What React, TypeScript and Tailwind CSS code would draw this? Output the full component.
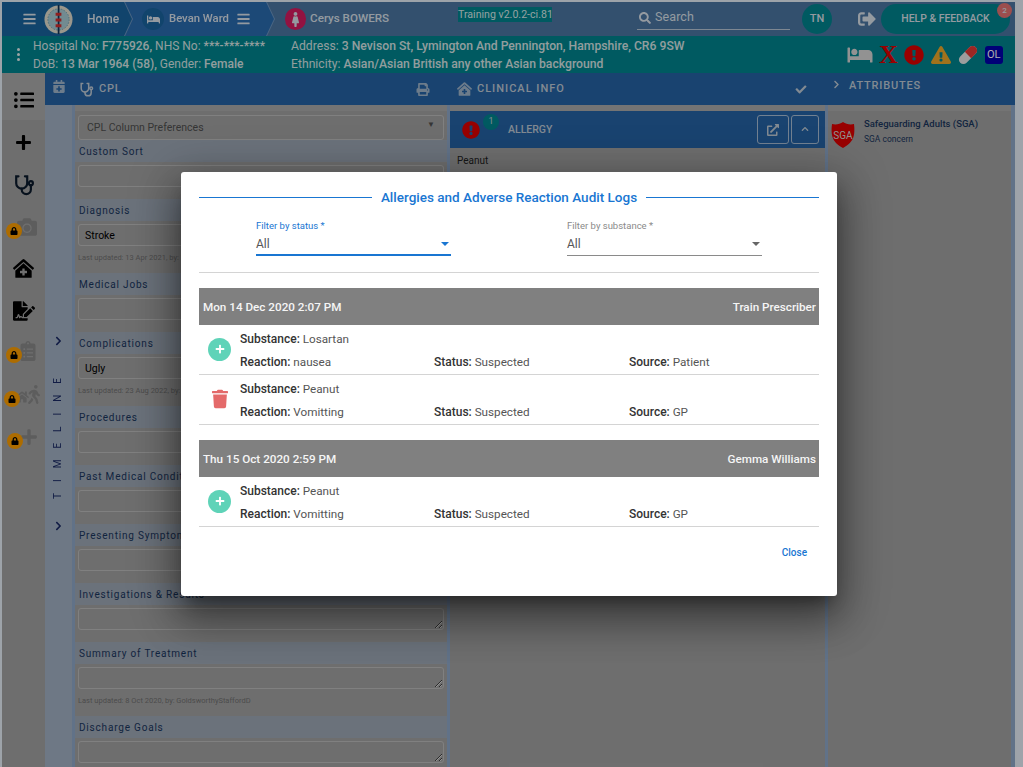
import {
  FaBars,
  FaBed,
  FaCamera,
  FaCalendarPlus,
  FaCheck,
  FaChevronRight,
  FaChevronUp,
  FaClinicMedical,
  FaClipboardList,
  FaExclamationCircle,
  FaExclamationTriangle,
  FaExternalLinkAlt,
  FaFemale,
  FaFileSignature,
  FaHome,
  FaListUl,
  FaLock,
  FaPlus,
  FaPrint,
  FaSearch,
  FaSignOutAlt,
  FaTrash,
  FaWalking,
} from "react-icons/fa";
import type { ReactNode } from "react";

const cplFields = [
  { label: "Custom Sort" },
  { label: "Diagnosis", value: "Stroke", note: "Last updated: 13 Apr 2021, by: WilliamsG" },
  { label: "Medical Jobs" },
  { label: "Complications", value: "Ugly", note: "Last updated: 23 Aug 2022, by: WilliamsG" },
  { label: "Procedures" },
  { label: "Past Medical Conditions" },
  { label: "Presenting Symptoms" },
  { label: "Investigations & Results" },
  { label: "Summary of Treatment", note: "Last updated: 8 Oct 2020, by: GoldsworthyStaffordD" },
  { label: "Discharge Goals" },
];

function Scope({ className }: { className: string }) {
  return (
    <svg viewBox="0 0 24 24" fill="none" stroke="currentColor" strokeWidth="2.4" strokeLinecap="round" className={className}>
      <path d="M6 2.5H3.5V10a6 6 0 0 0 12 0V2.5H13" />
      <path d="M9.5 16v1a5 5 0 0 0 10 0v-4" />
      <circle cx="19.5" cy="10" r="2.2" />
    </svg>
  );
}

function Logo() {
  return (
    <svg viewBox="0 0 30 30" className="h-[29px] w-[29px] shrink-0">
      <circle cx="15" cy="15" r="14.5" fill="#e4dfcf" />
      <circle cx="15" cy="15" r="11" fill="#a9cdd6" />
      <circle cx="15" cy="15" r="11" fill="none" stroke="#6f9fb0" strokeWidth="1" strokeDasharray="1.5 1.5" />
      <rect x="14.2" y="0" width="1.8" height="30" fill="#12345a" />
      <path d="M12 8h6v3h-6zM12 14h6v3h-6zM12 20h6v3h-6z" fill="#d32f2f" />
    </svg>
  );
}

function Shield() {
  return (
    <svg viewBox="0 0 24 26" className="h-[26px] w-[24px] shrink-0">
      <path d="M12 0c3 2 7 3 11 2 1 9 1 18-11 24C0 20 0 11 1 2c4 1 8 0 11-2z" fill="#e00000" />
      <text x="12" y="16.5" textAnchor="middle" fontSize="10" fill="#d8d8d8" fontFamily="Roboto, sans-serif">
        SGA
      </text>
    </svg>
  );
}

function Locked({ icon, left }: { icon: ReactNode; left: string }) {
  return (
    <div className="relative flex h-6 items-center justify-center text-[#8a8a8a]">
      {icon}
      <span className={`absolute top-[6px] flex h-[16px] w-[16px] items-center justify-center rounded-full bg-[#ffa000] text-black ${left}`}>
        <FaLock className="h-[8px] w-[8px]" />
      </span>
    </div>
  );
}

function Sidebar() {
  return (
    <aside className="flex w-[43px] shrink-0 flex-col items-center bg-[#a3a3a3] text-black">
      <div className="flex h-[47px] w-full items-end justify-center bg-[#acacac] pb-[10px]">
        <FaListUl className="h-[20px] w-[20px]" />
      </div>
      <FaPlus className="mt-[14px] h-[17px] w-[17px]" />
      <Scope className="mt-[23px] h-[22px] w-[22px] text-[#0b1a2c]" />
      <div className="mt-[21px] w-full">
        <Locked left="left-[4px]" icon={<FaCamera className="ml-[6px] h-[20px] w-[20px] -translate-y-[2px]" />} />
      </div>
      <FaClinicMedical className="mt-[17px] h-[21px] w-[21px]" />
      <FaFileSignature className="mt-[22px] h-[20px] w-[22px]" />
      <div className="mt-[20px] w-full">
        <Locked left="left-[4px]" icon={<FaClipboardList className="ml-[8px] h-[20px] w-[20px] -translate-y-[2px]" />} />
      </div>
      <div className="mt-[20px] w-full">
        <Locked
          left="left-[2px]"
          icon={
            <span className="ml-[8px] flex -translate-y-[3px] items-end">
              <FaHome className="h-[14px] w-[14px]" />
              <FaWalking className="-ml-[2px] h-[19px] w-[14px]" />
            </span>
          }
        />
      </div>
      <div className="mt-[18px] w-full">
        <Locked left="left-[5px]" icon={<FaPlus className="ml-[10px] h-[18px] w-[18px] -translate-y-[2px]" />} />
      </div>
    </aside>
  );
}

function TopBar() {
  return (
    <header className="flex h-[34px] items-stretch bg-[#4c76a3] font-['Roboto',sans-serif] text-[#dbe3ec]">
      <div className="relative z-20 [filter:drop-shadow(1px_0_0_#6f97c2)]">
        <div className="flex h-full w-[130px] items-center bg-[#1a659f] pl-[20px] [clip-path:polygon(0_0,122px_0,130px_50%,122px_100%,0_100%)]">
          <FaBars className="h-[14px] w-[15px]" />
          <span className="ml-[7px]">
            <Logo />
          </span>
          <span className="ml-[14px] text-[12px] font-medium">Home</span>
        </div>
      </div>
      <div className="relative z-10 -ml-[8px] [filter:drop-shadow(1px_0_0_#6f97c2)]">
        <div className="flex h-full w-[150px] items-center bg-[#2a6cb0] pl-[18px] [clip-path:polygon(0_0,142px_0,150px_50%,142px_100%,0_100%)]">
          <span className="flex h-[22px] w-[22px] items-center justify-center rounded-full bg-[#1a659f]">
            <FaBed className="h-[13px] w-[13px]" />
          </span>
          <span className="ml-[5px] w-[67px] whitespace-nowrap text-[11.3px] font-medium">Bevan Ward</span>
          <FaBars className="h-[14px] w-[15px]" />
        </div>
      </div>
      <div className="ml-[11px] flex w-[104px] items-center">
        <span className="flex h-[22px] w-[22px] items-center justify-center rounded-full bg-[#d81b60]">
          <FaFemale className="h-[15px] w-[15px]" />
        </span>
        <span className="ml-[4px] whitespace-nowrap text-[11.6px] font-medium">Cerys BOWERS</span>
      </div>
      <div className="ml-[69px] pt-[5px]">
        <span className="block h-[15px] w-[94px] bg-[#008590] text-[10.6px] leading-[15px] whitespace-nowrap text-[#dcecec]">
          Training v2.0.2-ci.81
        </span>
      </div>
      <div className="ml-[85px] mt-[4px] flex h-[24px] w-[153px] items-center border-b border-[#b8c8d8] pl-[2px]">
        <FaSearch className="h-[12px] w-[12px]" />
        <span className="ml-[4px] text-[12.5px] tracking-[0.1px]">Search</span>
      </div>
      <div className="ml-[12px] flex items-center">
        <span className="flex h-[30px] w-[30px] items-center justify-center rounded-full bg-[#008590] text-[11px] font-medium">TN</span>
        <FaSignOutAlt className="ml-[26px] h-[18px] w-[18px]" />
      </div>
      <div className="relative ml-[5px] mt-[2px] flex h-[30px] w-[129px] items-center justify-center rounded-full bg-[#008590] text-[10.4px] font-medium">
        HELP &amp; FEEDBACK
        <span className="absolute -top-[1px] -right-[2px] flex h-[15px] w-[15px] items-center justify-center rounded-full bg-[#e57373] text-[8px]">
          2
        </span>
      </div>
    </header>
  );
}

function PatientBar() {
  return (
    <section className="flex h-[37px] items-center bg-[#008590] font-['Roboto',sans-serif] text-[12.1px] leading-[18px] whitespace-nowrap text-[#d9e8e8]">
      <div className="flex w-[31px] flex-col items-center gap-[2px] pl-[1px]">
        <span className="h-[3px] w-[3px] rounded-full bg-[#e6f2f2]" />
        <span className="h-[3px] w-[3px] rounded-full bg-[#e6f2f2]" />
        <span className="h-[3px] w-[3px] rounded-full bg-[#e6f2f2]" />
      </div>
      <div className="w-[258px] pt-[1px] text-[12px]">
        <p>
          Hospital No: <b className="font-medium">F775926,</b> NHS No: <b className="font-medium">***-***-****</b>
        </p>
        <p>
          DoB: <b className="font-medium">13 Mar 1964 (58),</b> Gender: <b className="font-medium">Female</b>
        </p>
      </div>
      <div className="w-[556px] pt-[1px] text-[12.2px]">
        <p>
          Address: <b className="font-medium">3 Nevison St, Lymington And Pennington, Hampshire, CR6 9SW</b>
        </p>
        <p>
          Ethnicity: <b className="font-medium">Asian/Asian British any other Asian background</b>
        </p>
      </div>
      <div className="flex items-center gap-[7px]">
        <FaBed className="h-[20px] w-[26px] text-[#d8d8d8]" />
        <span className="-mx-[1px] font-['Liberation_Serif',serif] text-[26px] leading-[26px] font-bold text-[#e00000]">X</span>
        <FaExclamationCircle className="h-[20px] w-[20px] text-[#e00000]" />
        <FaExclamationTriangle className="h-[18px] w-[20px] text-[#eea82a]" />
        <svg viewBox="0 0 20 20" className="h-[20px] w-[20px]">
          <g transform="rotate(45 10 10)">
            <rect x="5.5" y="-1" width="9" height="22" rx="4.5" fill="#e8e8e8" />
            <path d="M5.5 10V3.5a4.5 4.5 0 0 1 9 0V10z" fill="#e53935" />
          </g>
        </svg>
        <span className="flex h-[18px] w-[18px] items-center justify-center rounded-[3px] bg-[#0000b0] text-[11px] text-white">OL</span>
      </div>
    </section>
  );
}

function SectionBar() {
  return (
    <div className="flex h-[32px] bg-[#2664a5] font-['Roboto',sans-serif] text-[11px] font-medium tracking-[0.8px] text-[#c0ccd8]">
      <div className="flex w-[402px] items-center">
        <FaCalendarPlus className="ml-[8px] h-[13px] w-[12px] -translate-y-[3px] opacity-80" />
        <Scope className="ml-[14px] h-[15px] w-[15px]" />
        <span className="ml-[5px]">CPL</span>
        <FaPrint className="ml-auto mr-[17px] h-[13px] w-[14px] opacity-80" />
      </div>
      <div className="flex w-[378px] items-center">
        <FaClinicMedical className="ml-[10px] h-[14px] w-[15px] opacity-80" />
        <span className="ml-[5px] tracking-[1px]">CLINICAL INFO</span>
        <FaCheck className="ml-auto mr-[18px] h-[11px] w-[12px]" />
      </div>
      <div className="flex flex-1 items-start pt-[5px]">
        <FaChevronRight className="ml-[8px] mt-[2px] h-[9px] w-[7px]" />
        <span className="ml-[9px] tracking-[0.8px]">ATTRIBUTES</span>
      </div>
    </div>
  );
}

function Timeline() {
  return (
    <div className="flex w-[27px] shrink-0 flex-col items-center justify-center gap-[21px] bg-[#a3b2c4] pb-[5px] pr-[1px] font-['Roboto',sans-serif] text-[#1a2a66]">
      <FaChevronRight className="h-[10px] w-[7px]" />
      <span className="rotate-180 text-[10px] leading-none tracking-[11px] [writing-mode:vertical-rl]">TIMELINE</span>
      <FaChevronRight className="h-[10px] w-[7px]" />
    </div>
  );
}

function CplPanel() {
  return (
    <div className="w-[372px] shrink-0 overflow-hidden bg-[#a3a3a3] font-['Roboto',sans-serif]">
      <div className="h-[6px] bg-[#acacac]" />
      <div className="px-[3px] pt-[4px]">
        <div className="flex h-[25px] items-center justify-between rounded-[3px] border border-[#bdbdbd] pl-[8px] pr-[8px] text-[10.5px] text-[#4f4f4f]">
          <span>CPL Column Preferences</span>
          <span className="-translate-y-[3px] text-[8px]">▼</span>
        </div>
      </div>
      <div>
        {cplFields.map((field) => (
          <div key={field.label} className={field.note ? "h-[74px]" : "h-[59px]"}>
            <div className="flex h-[22px] items-center bg-[#9ea8b6] pl-[4px] text-[10px] tracking-[0.8px] text-[#1a365d]">{field.label}</div>
            <div className="px-[3px] pt-[3px]">
              <textarea
                readOnly
                value={field.value ?? ""}
                className="block h-[22px] w-full resize-y rounded-[3px] border border-[#bdbdbd] bg-transparent pl-[6px] pt-[4px] text-[10.5px] leading-[14px] text-black outline-none"
              />
            </div>
            {field.note && <p className="pl-[3px] pt-[6px] text-[7.5px] text-[#707070]">{field.note}</p>}
          </div>
        ))}
      </div>
    </div>
  );
}

function ClinicalPanel() {
  return (
    <div className="w-[375px] shrink-0 bg-[#a3a3a3] font-['Roboto',sans-serif]">
      <div className="h-[6px] bg-[#acacac]" />
      <div className="flex h-[37px] items-center bg-[#2664a5] text-[#c0ccd8]">
        <span className="relative ml-[12px] flex">
          <FaExclamationCircle className="h-[18px] w-[18px] text-[#e00000]" />
          <span className="absolute -top-[7px] left-[21px] flex h-[16px] w-[16px] items-center justify-center rounded-full bg-[#008590] text-[9px]">1</span>
        </span>
        <span className="ml-[28px] text-[10.5px] font-medium">ALLERGY</span>
        <span className="ml-auto flex h-[29px] w-[32px] items-center justify-center rounded-[3px] border border-[#a9bfd6]">
          <FaExternalLinkAlt className="h-[12px] w-[12px]" />
        </span>
        <span className="ml-[2px] mr-[6px] flex h-[29px] w-[28px] items-center justify-center rounded-[3px] border border-[#a9bfd6]">
          <FaChevronUp className="h-[8px] w-[8px] -translate-y-[1px]" />
        </span>
      </div>
      <p className="pl-[7px] pt-[5px] text-[10px] text-[#222222]">Peanut</p>
    </div>
  );
}

function AttributesPanel() {
  return (
    <div className="flex-1 border-r-[4px] border-[#8fa9c9] bg-[#a3a3a3] font-['Roboto',sans-serif]">
      <div className="h-[6px] bg-[#acacac]" />
      <div className="flex gap-[9px] pl-[3px] pt-[11px]">
        <Shield />
        <div className="-mt-[5px] text-[#1a365d]">
          <p className="text-[9.5px] font-medium">Safeguarding Adults (SGA)</p>
          <p className="pt-[2px] text-[8.5px]">SGA concern</p>
        </div>
      </div>
    </div>
  );
}

function Field({ label, focused }: { label: string; focused?: boolean }) {
  return (
    <div className={`h-[36px] w-[195px] ${focused ? "border-b-2 border-[#1976d2]" : "border-b border-[#8a8a8a]"}`}>
      <p className={`text-[9.5px] leading-[12px] ${focused ? "text-[#1976d2]" : "text-[#8a8a8a]"}`}>{label} *</p>
      <div className="flex items-center justify-between pt-[4px] text-[12px] leading-[16px] text-[#555555]">
        <span>All</span>
        <span className={`mr-[2px] h-0 w-0 border-x-[4px] border-t-[4px] border-x-transparent ${focused ? "border-t-[#1976d2]" : "border-t-[#666666]"}`} />
      </div>
    </div>
  );
}

function LogRow({ kind, substance, reaction, source }: { kind: "add" | "remove"; substance: string; reaction: string; source: string }) {
  return (
    <div className="flex h-[50px] border-b border-[#d4d4d4] text-[11.7px] leading-[16px] text-[#555555]">
      <div className="flex w-[41px] items-center pl-[9px]">
        {kind === "add" ? (
          <span className="flex h-[23px] w-[23px] items-center justify-center rounded-full bg-[#5fd3b8] text-white">
            <FaPlus className="h-[10px] w-[10px]" />
          </span>
        ) : (
          <FaTrash className="ml-[4px] h-[20px] w-[16px] text-[#e46a6a]" />
        )}
      </div>
      <div className="flex-1 pt-[6px]">
        <p>
          <b className="text-[12px] font-medium text-[#333333]">Substance:</b> {substance}
        </p>
        <div className="flex pt-[7px]">
          <p className="w-[194px]">
            <b className="text-[12px] font-medium text-[#333333]">Reaction:</b> {reaction}
          </p>
          <p className="w-[195px]">
            <b className="text-[12px] font-medium text-[#333333]">Status:</b> Suspected
          </p>
          <p>
            <b className="text-[12px] font-medium text-[#333333]">Source:</b> {source}
          </p>
        </div>
      </div>
    </div>
  );
}

function LogGroup({ date, user, children }: { date: string; user: string; children: ReactNode }) {
  return (
    <div>
      <div className="flex h-[37px] items-center justify-between bg-[#808080] px-[4px] pt-[4px] text-[11.7px] font-medium text-[#f5f5f5]">
        <span>{date}</span>
        <span className="-mr-[1px]">{user}</span>
      </div>
      {children}
    </div>
  );
}

function AuditModal() {
  return (
    <div className="absolute inset-0 z-30 flex items-center justify-center bg-black/[0.32] pr-[5px]">
      <div className="h-[424px] w-[656px] rounded-[3px] bg-white px-[18px] pt-[18px] font-['Roboto',sans-serif] shadow-[0_11px_15px_-7px_rgba(0,0,0,0.4),0_24px_38px_3px_rgba(0,0,0,0.3),0_9px_46px_8px_rgba(0,0,0,0.25)]">
        <div className="flex h-[15px] items-center gap-[9px]">
          <span className="h-px flex-1 bg-[#1976d2]" />
          <h2 className="text-[13.5px] font-medium text-[#1976d2]">Allergies and Adverse Reaction Audit Logs</h2>
          <span className="h-px flex-1 bg-[#1976d2]" />
        </div>
        <div className="flex gap-[116px] pl-[57px] pt-[15px]">
          <Field label="Filter by status" focused />
          <Field label="Filter by substance" />
        </div>
        <div className="mt-[16px] border-t border-[#d4d4d4]" />
        <div className="pt-[15px]">
          <LogGroup date="Mon 14 Dec 2020 2:07 PM" user="Train Prescriber">
            <LogRow kind="add" substance="Losartan" reaction="nausea" source="Patient" />
            <LogRow kind="remove" substance="Peanut" reaction="Vomitting" source="GP" />
          </LogGroup>
        </div>
        <div className="pt-[15px]">
          <LogGroup date="Thu 15 Oct 2020 2:59 PM" user="Gemma Williams">
            <LogRow kind="add" substance="Peanut" reaction="Vomitting" source="GP" />
          </LogGroup>
        </div>
        <div className="flex justify-end pr-[12px] pt-[18px] text-[10px] font-medium text-[#1976d2]">Close</div>
      </div>
    </div>
  );
}

export default function App() {
  return (
    <div className="relative h-[767px] w-[1023px] overflow-hidden bg-[#e8f0fa] pl-[2px] pr-[8px] pt-[2px]">
      <TopBar />
      <PatientBar />
      <div className="flex h-[694px]">
        <Sidebar />
        <div className="min-w-0 flex-1">
          <SectionBar />
          <div className="flex h-[662px]">
            <Timeline />
            <div className="w-[3px] shrink-0 bg-[#8fa9c9]" />
            <CplPanel />
            <div className="w-[3px] shrink-0 bg-[#8fa9c9]" />
            <ClinicalPanel />
            <div className="w-[3px] shrink-0 bg-[#8fa9c9]" />
            <AttributesPanel />
          </div>
        </div>
      </div>
      <AuditModal />
    </div>
  );
}
